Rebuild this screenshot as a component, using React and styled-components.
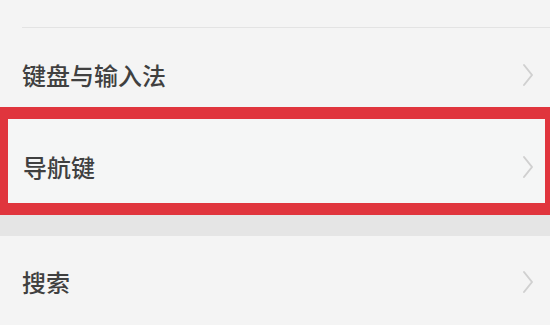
import styled, { createGlobalStyle } from "styled-components"

const GlobalStyle = createGlobalStyle`
  html, body {
    margin: 0;
    padding: 0;
    background: #f4f4f4;
  }
  body {
    font-family: "Noto Sans CJK SC", "Noto Sans", sans-serif;
  }
`

const Screen = styled.div`
  width: 550px;
  height: 325px;
  overflow: hidden;
  background: #f4f4f4;
  display: flex;
  flex-direction: column;
`

const TopStub = styled.div`
  height: 28px;
  flex-shrink: 0;
  margin-left: 22px;
  border-bottom: 1px solid #e3e3e3;
  box-sizing: border-box;
`

const Row = styled.div`
  height: ${(p) => p.$height}px;
  flex-shrink: 0;
  box-sizing: border-box;
  display: flex;
  align-items: center;
  padding: ${(p) => p.$shift}px 15px 0 22px;
  background: #f4f4f4;
`

const Highlight = styled.div`
  flex-shrink: 0;
  border-style: solid;
  border-color: #e0353d;
  border-width: 12px 5px 12px 8px;
  box-sizing: border-box;
  height: 108px;
  display: flex;
  flex-direction: column;

  ${Row} {
    padding-left: 15px;
    padding-right: 10px;
    background: #f5f6f6;
  }
`

const Label = styled.span`
  flex: 1;
  font-size: 24px;
  font-weight: 500;
  color: #404040;
  letter-spacing: 0;
  line-height: 1;
`

const SectionGap = styled.div`
  height: 21px;
  flex-shrink: 0;
  background: #e5e5e5;
`

const Chevron = () => (
  <svg width="14" height="26" viewBox="0 0 14 26">
    <polyline
      points="3,3 11,13 3,23"
      fill="none"
      stroke="#d0d0d0"
      strokeWidth="2"
      strokeLinecap="round"
      strokeLinejoin="round"
    />
  </svg>
)

export default function App() {
  return (
    <>
      <GlobalStyle />
      <Screen>
        <TopStub />
        <Row $height={79} $shift={14}>
          <Label>键盘与输入法</Label>
          <Chevron />
        </Row>
        <Highlight>
          <Row $height={84} $shift={12}>
            <Label>导航键</Label>
            <Chevron />
          </Row>
        </Highlight>
        <SectionGap />
        <Row $height={89} $shift={2}>
          <Label>搜索</Label>
          <Chevron />
        </Row>
      </Screen>
    </>
  )
}
